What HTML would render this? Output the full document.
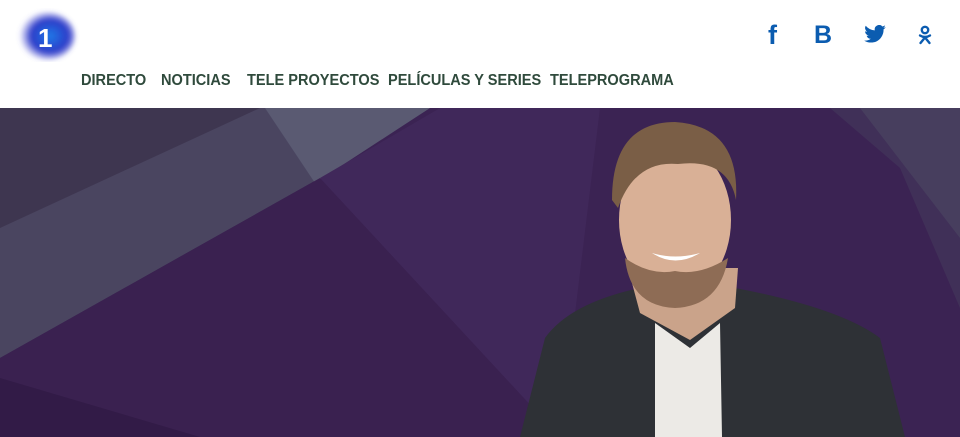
<!DOCTYPE html>
<html><head><meta charset="utf-8"><style>
*{margin:0;padding:0;box-sizing:border-box}
body{width:960px;height:437px;overflow:hidden;background:#fff;font-family:"Liberation Sans",sans-serif;position:relative}
.nav{position:absolute;top:72px;left:81px;font-weight:bold;font-size:16px;color:#2f4a3c;white-space:nowrap}
.nav span{position:absolute;top:0;transform:scaleX(0.91);transform-origin:left}
.hero{position:absolute;top:108px;left:0;width:960px;height:329px;overflow:hidden;background:#3b2353}
</style></head><body>
<svg style="position:absolute;left:14px;top:8px" width="66" height="54">
<defs><radialGradient id="g" cx="0.55" cy="0.5" r="0.55"><stop offset="0" stop-color="#1f7ae8"/><stop offset="0.6" stop-color="#2d3cc8"/><stop offset="1" stop-color="#5a5ad8" stop-opacity="0"/></radialGradient>
<filter id="b"><feGaussianBlur stdDeviation="2.5"/></filter></defs>
<ellipse cx="33" cy="28" rx="28" ry="24" fill="url(#g)" filter="url(#b)"/>
<text x="24" y="39" font-family="Liberation Sans" font-weight="bold" font-size="26" fill="#fff">1</text>
</svg>
<div class="nav"><span style="left:0">DIRECTO</span><span style="left:80px">NOTICIAS</span><span style="left:166px">TELE PROYECTOS</span><span style="left:307px">PELÍCULAS Y SERIES</span><span style="left:469px">TELEPROGRAMA</span></div>
<div style="position:absolute;left:768px;top:20px;color:#0b5cb0;font-weight:bold;font-size:27px;font-family:'Liberation Sans'">f</div>
<div style="position:absolute;left:814px;top:21px;color:#0b5cb0;font-weight:bold;font-size:25px">B</div>
<svg style="position:absolute;left:864px;top:25px" width="22" height="18" viewBox="0 0 24 20"><path fill="#0b5cb0" d="M24 2.4a10 10 0 0 1-2.8.8A5 5 0 0 0 23.3.4a10 10 0 0 1-3.1 1.2A4.9 4.9 0 0 0 11.8 6 14 14 0 0 1 1.7.9a4.9 4.9 0 0 0 1.5 6.6A5 5 0 0 1 1 6.9a4.9 4.9 0 0 0 3.9 4.9 5 5 0 0 1-2.2.1 4.9 4.9 0 0 0 4.6 3.4A9.9 9.9 0 0 1 0 17.3 14 14 0 0 0 7.5 19.5c9.1 0 14-7.5 14-14v-.6A10 10 0 0 0 24 2.4z"/></svg>
<svg style="position:absolute;left:917px;top:25px" width="16" height="20" viewBox="0 0 16 20"><circle cx="8" cy="5" r="3.2" fill="none" stroke="#0b5cb0" stroke-width="2.4"/><path d="M3 10.5q5 3 10 0M8 12.5l-4.5 5.5M8 12.5l4.5 5.5" fill="none" stroke="#0b5cb0" stroke-width="2.4" stroke-linecap="round"/></svg>
<div class="hero">
<svg width="960" height="329">
<polygon points="0,0 430,0 320,70 0,250" fill="#4a4560"/>
<polygon points="0,0 260,0 0,120" fill="#3e3650"/>
<polygon points="265,0 430,0 315,75" fill="#5a5a72"/>
<polygon points="0,250 320,70 560,329 0,329" fill="#3a2150"/>
<polygon points="0,329 0,270 200,329" fill="#321b47"/>
<polygon points="320,70 440,0 600,0 560,329" fill="#40285a"/>
<polygon points="860,0 960,0 960,130" fill="#4b4862"/>
<polygon points="830,0 960,0 960,200 900,60" fill="#45395c" opacity="0.6"/>
<path d="M520,329 L545,230 Q570,195 640,180 L690,205 L735,180 Q840,200 880,230 L905,329 Z" fill="#2e3136"/>
<path d="M655,215 L690,240 L720,215 L722,329 L655,329 Z" fill="#eceae6"/>
<path d="M628,160 L640,205 L690,232 L735,200 L738,160 Z" fill="#caa38a"/>
<ellipse cx="675" cy="112" rx="56" ry="76" fill="#d9b096"/>
<path d="M612,92 Q612,14 675,14 Q740,18 736,92 Q728,50 678,56 Q635,52 618,100 Z" fill="#7a5e46"/>
<path d="M625,150 Q630,198 675,200 Q720,198 728,150 Q700,168 675,163 Q650,168 625,150Z" fill="#8e6c55"/>
<path d="M652,145 Q675,160 700,145 Q675,152 652,145Z" fill="#fff"/>
</svg>
</div>
</body></html>
